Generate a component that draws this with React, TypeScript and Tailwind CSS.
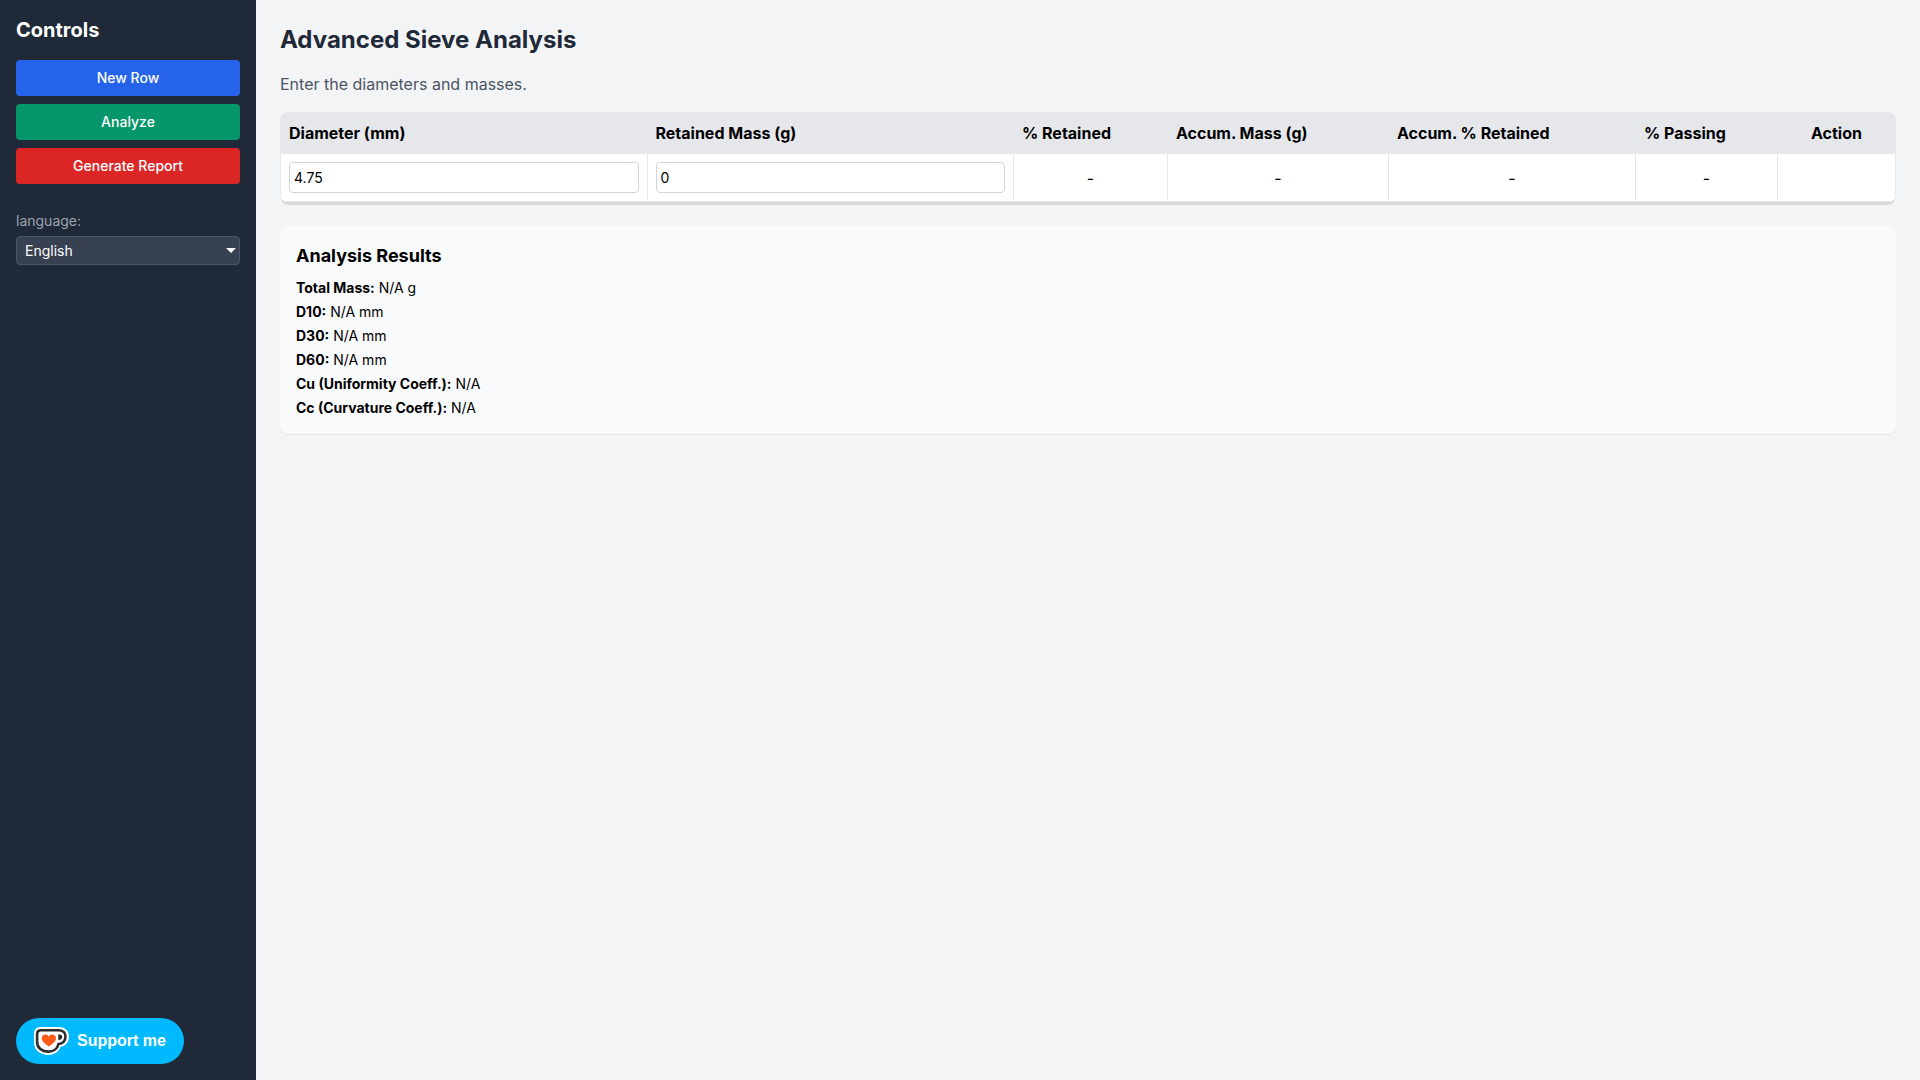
import { useState } from 'react'

const columns = [
  { label: 'Diameter (mm)', width: '' },
  { label: 'Retained Mass (g)', width: '' },
  { label: '% Retained', width: 'w-[154px]' },
  { label: 'Accum. Mass (g)', width: 'w-[221px]' },
  { label: 'Accum. % Retained', width: 'w-[247px]' },
  { label: '% Passing', width: 'w-[142px]' },
]

const results = [
  ['Total Mass:', 'N/A g'],
  ['D10:', 'N/A mm'],
  ['D30:', 'N/A mm'],
  ['D60:', 'N/A mm'],
  ['Cu (Uniformity Coeff.):', 'N/A'],
  ['Cc (Curvature Coeff.):', 'N/A'],
]

function CupIcon() {
  return (
    <svg width="35" height="28" viewBox="0 0 35 28" aria-hidden="true">
      <path
        d="M7 0H25C31 0 35 4 35 9.5C35 15 31.5 19 26.5 19.8C25 24.5 20.5 28 14.5 28C6 28 0 23 0 15V7C0 2.5 2.5 0 7 0Z"
        fill="#fff"
      />
      <path
        d="M7 3.2H24.5C29 3.2 31.5 6 31.5 9.5C31.5 13.5 29 16.7 24.5 17C23.5 21.5 19.5 24.6 14.5 24.6C8 24.6 3.1 21 3.1 15V7C3.1 4.5 4.5 3.2 7 3.2Z"
        fill="#fff"
        stroke="#2b2b2b"
        strokeWidth="2.6"
      />
      <path d="M24.3 7.2V13C26.8 13 28.2 11.8 28.2 10C28.2 8.2 26.8 7.2 24.3 7.2Z" fill="#2b2b2b" />
      <path
        d="M14.8 19.6C11 16.8 7.7 14.2 7.7 11.2C7.7 9 9.3 7.5 11.3 7.5C13 7.5 14.2 8.3 14.8 9.5C15.4 8.3 16.6 7.5 18.3 7.5C20.3 7.5 22 9 22 11.2C22 14.2 18.6 16.8 14.8 19.6Z"
        fill="#ff5a16"
      />
    </svg>
  )
}

function Sidebar() {
  const [language, setLanguage] = useState('en')
  return (
    <aside className="flex w-64 shrink-0 flex-col bg-[#1f2937] p-4 text-white">
      <h2 className="mb-4 text-xl leading-7 font-bold">Controls</h2>
      <div className="flex flex-col gap-2 text-sm font-medium">
        <button type="button" className="rounded bg-[#2563eb] px-4 py-2">New Row</button>
        <button type="button" className="rounded bg-[#059669] px-4 py-2">Analyze</button>
        <button type="button" className="rounded bg-[#dc2626] px-4 py-2">Generate Report</button>
      </div>
      <label htmlFor="language" className="mt-[27px] mb-[5px] text-sm text-[#9ca3af]">language:</label>
      <div className="relative">
        <select
          id="language"
          value={language}
          onChange={(e) => setLanguage(e.target.value)}
          className="block h-[29px] w-full appearance-none rounded border border-[#4b5563] bg-[#374151] px-2 text-sm text-white"
        >
          <option value="en">English</option>
          <option value="pt">Português</option>
          <option value="es">Español</option>
        </select>
        <svg className="pointer-events-none absolute top-3 right-1" width="10" height="5" viewBox="0 0 10 5" aria-hidden="true">
          <path d="M0 0H10L5 5Z" fill="#fff" />
        </svg>
      </div>
      <a
        href="#support"
        className="mt-auto flex h-[46px] items-center gap-2 self-start rounded-full bg-[#00b9fe] px-[18px] font-['Liberation_Sans',Arial,sans-serif] text-base font-bold text-white"
      >
        <CupIcon />
        Support me
      </a>
    </aside>
  )
}

function SieveTable() {
  const [diameter, setDiameter] = useState('4.75')
  const [mass, setMass] = useState('0')
  const cell = 'border border-[#e5e7eb] p-2'
  const input = 'block h-[31px] w-full rounded border border-[#d1d5db] bg-white p-1 text-sm'
  return (
    <div className="overflow-hidden rounded-lg shadow-[0_4px_0_-1px_rgba(0,0,0,0.11)]">
      <table className="w-full table-fixed border-collapse bg-white">
        <colgroup>
          {columns.map(({ label, width }) => (
            <col key={label} className={width} />
          ))}
          <col className="w-[118px]" />
        </colgroup>
        <thead>
          <tr className="bg-[#e5e7eb] text-left">
            {columns.map(({ label }) => (
              <th key={label} className="border border-[#e5e7eb] p-2 font-bold">{label}</th>
            ))}
            <th className="border border-[#e5e7eb] p-2 text-center font-bold">Action</th>
          </tr>
        </thead>
        <tbody>
          <tr className="text-center">
            <td className={cell}>
              <input aria-label="Diameter (mm)" value={diameter} onChange={(e) => setDiameter(e.target.value)} className={input} />
            </td>
            <td className={cell}>
              <input aria-label="Retained Mass (g)" value={mass} onChange={(e) => setMass(e.target.value)} className={input} />
            </td>
            {columns.slice(2).map(({ label }) => (
              <td key={label} className={cell}>-</td>
            ))}
            <td className={cell} />
          </tr>
        </tbody>
      </table>
    </div>
  )
}

export default function App() {
  return (
    <div className="flex min-h-screen bg-[#f3f4f6] font-[Inter,sans-serif] text-black">
      <Sidebar />
      <main className="min-w-0 flex-1 p-6">
        <h1 className="mb-4 text-2xl font-bold text-[#1f2937]">Advanced Sieve Analysis</h1>
        <p className="mb-4 text-[#4b5563]">Enter the diameters and masses.</p>
        <SieveTable />
        <section className="mt-6 rounded-lg bg-[#f9fafb] p-4 shadow-[0_1px_0_rgba(0,0,0,0.05)]">
          <h2 className="mb-2 text-lg font-bold">Analysis Results</h2>
          <div className="flex flex-col gap-1 text-sm">
            {results.map(([label, value]) => (
              <p key={label}>
                <strong className="font-bold">{label}</strong> {value}
              </p>
            ))}
          </div>
        </section>
      </main>
    </div>
  )
}
